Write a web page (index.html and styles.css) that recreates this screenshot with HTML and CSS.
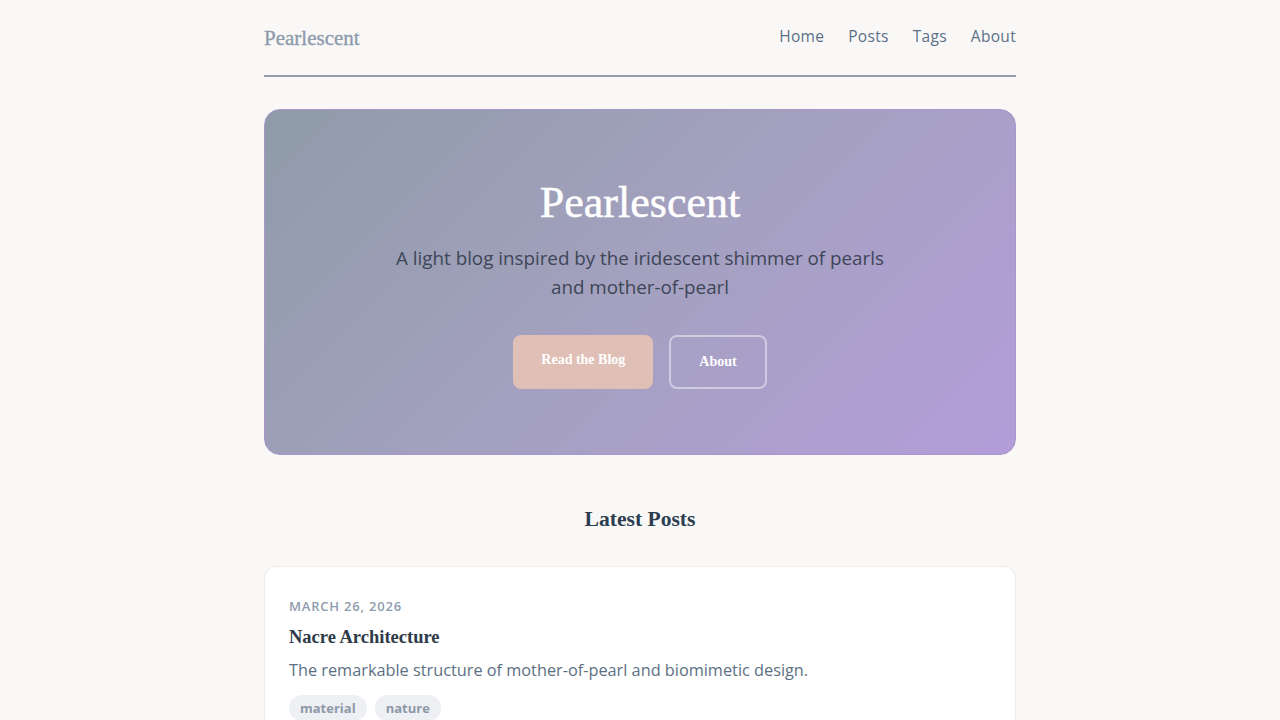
FILE: index.html
```html
<!DOCTYPE html>
<html lang="en">
<head>
<meta charset="utf-8">
<title>Pearlescent</title>
<link rel="stylesheet" href="styles.css">
</head>
<body>
<div class="container">
  <header class="site-header">
    <a class="logo" href="#">Pearlescent</a>
    <nav class="nav">
      <a href="#">Home</a>
      <a href="#">Posts</a>
      <a href="#">Tags</a>
      <a href="#">About</a>
    </nav>
  </header>

  <section class="hero">
    <h1 class="hero-title">Pearlescent</h1>
    <p class="hero-sub">A light blog inspired by the iridescent shimmer of pearls and mother-of-pearl</p>
    <div class="hero-actions">
      <a class="btn btn-primary" href="#">Read the Blog</a>
      <a class="btn btn-outline" href="#">About</a>
    </div>
  </section>

  <h2 class="section-title">Latest Posts</h2>

  <article class="card">
    <div class="card-date">March 26, 2026</div>
    <h3 class="card-title">Nacre Architecture</h3>
    <p class="card-desc">The remarkable structure of mother-of-pearl and biomimetic design.</p>
    <div class="tags">
      <span class="tag">material</span>
      <span class="tag">nature</span>
    </div>
  </article>
</div>
</body>
</html>
```

FILE: styles.css
```css
* { box-sizing: border-box; }
html, body { margin: 0; padding: 0; }
body {
  background: #f9f8f6;
  font-family: "Open Sans", "Noto Sans", sans-serif;
  color: #3d4656;
}
a { text-decoration: none; }
.container {
  width: 752px;
  margin: 0 auto;
}
.site-header {
  display: flex;
  justify-content: space-between;
  align-items: center;
  height: 77px;
  padding-bottom: 2px;
  border-bottom: 2px solid #939caa;
}
.logo {
  font-family: "Liberation Serif", serif;
  font-size: 21px;
  font-weight: 400;
  color: #8e9bac;
  -webkit-text-stroke: 0.35px #8e9bac;
  margin-top: 3px;
}
.nav {
  display: flex;
  gap: 24px;
  margin-top: -1px;
}
.nav a {
  font-size: 15.5px;
  font-weight: 500;
  letter-spacing: 0.3px;
  color: #5b7088;
}
.hero {
  margin-top: 32px;
  height: 346px;
  border-radius: 16px;
  border: 1px solid #a897cc;
  background: linear-gradient(135deg, #8f9ba8 0%, #a4a1c0 50%, #b39dd9 100%);
  display: flex;
  flex-direction: column;
  align-items: center;
  padding-top: 65px;
  text-align: center;
}
.hero-title {
  margin: 0;
  font-family: "Liberation Serif", serif;
  font-weight: 400;
  font-size: 44px;
  line-height: 56px;
  color: #ffffff;
  -webkit-text-stroke: 0.5px #ffffff;
}
.hero-sub {
  margin: 13px 0 0;
  max-width: 510px;
  font-size: 18.8px;
  line-height: 29px;
  color: #3d4656;
}
.hero-actions {
  display: flex;
  gap: 16px;
  margin-top: 33px;
}
.btn {
  display: flex;
  align-items: center;
  height: 54px;
  padding: 0 28px;
  border-radius: 8px;
  font-family: "Liberation Serif", serif;
  font-weight: 700;
  font-size: 14px;
  color: #ffffff;
}
.btn-primary {
  background: #e0bfb6;
  padding-bottom: 4px;
}
.btn-outline {
  border: 2px solid rgba(255,255,255,0.45);
  padding: 0 28px;
}
.section-title {
  margin: 50px 0 0;
  text-align: center;
  font-family: "Liberation Serif", serif;
  font-weight: 700;
  font-size: 21.6px;
  line-height: 28px;
  color: #2d3e50;
}
.card {
  margin-top: 33px;
  background: #ffffff;
  border: 1px solid #efedec;
  border-radius: 12px;
  padding: 30px 24px 24px;
}
.card-date {
  font-size: 13px;
  font-weight: 600;
  letter-spacing: 0.8px;
  text-transform: uppercase;
  color: #8f9cad;
  line-height: 18px;
}
.card-title {
  margin: 10px 0 0;
  font-family: "Liberation Serif", serif;
  font-weight: 700;
  font-size: 18.5px;
  line-height: 24px;
  color: #2d3a48;
}
.card-desc {
  margin: 8px 0 0;
  font-size: 16.3px;
  line-height: 26px;
  color: #5c7083;
}
.tags {
  display: flex;
  gap: 8px;
  margin-top: 12px;
}
.tag {
  background: #eef0f3;
  border-radius: 14px;
  padding: 3px 11px;
  font-size: 13px;
  font-weight: 700;
  color: #8d98a8;
  line-height: 20px;
}
```
